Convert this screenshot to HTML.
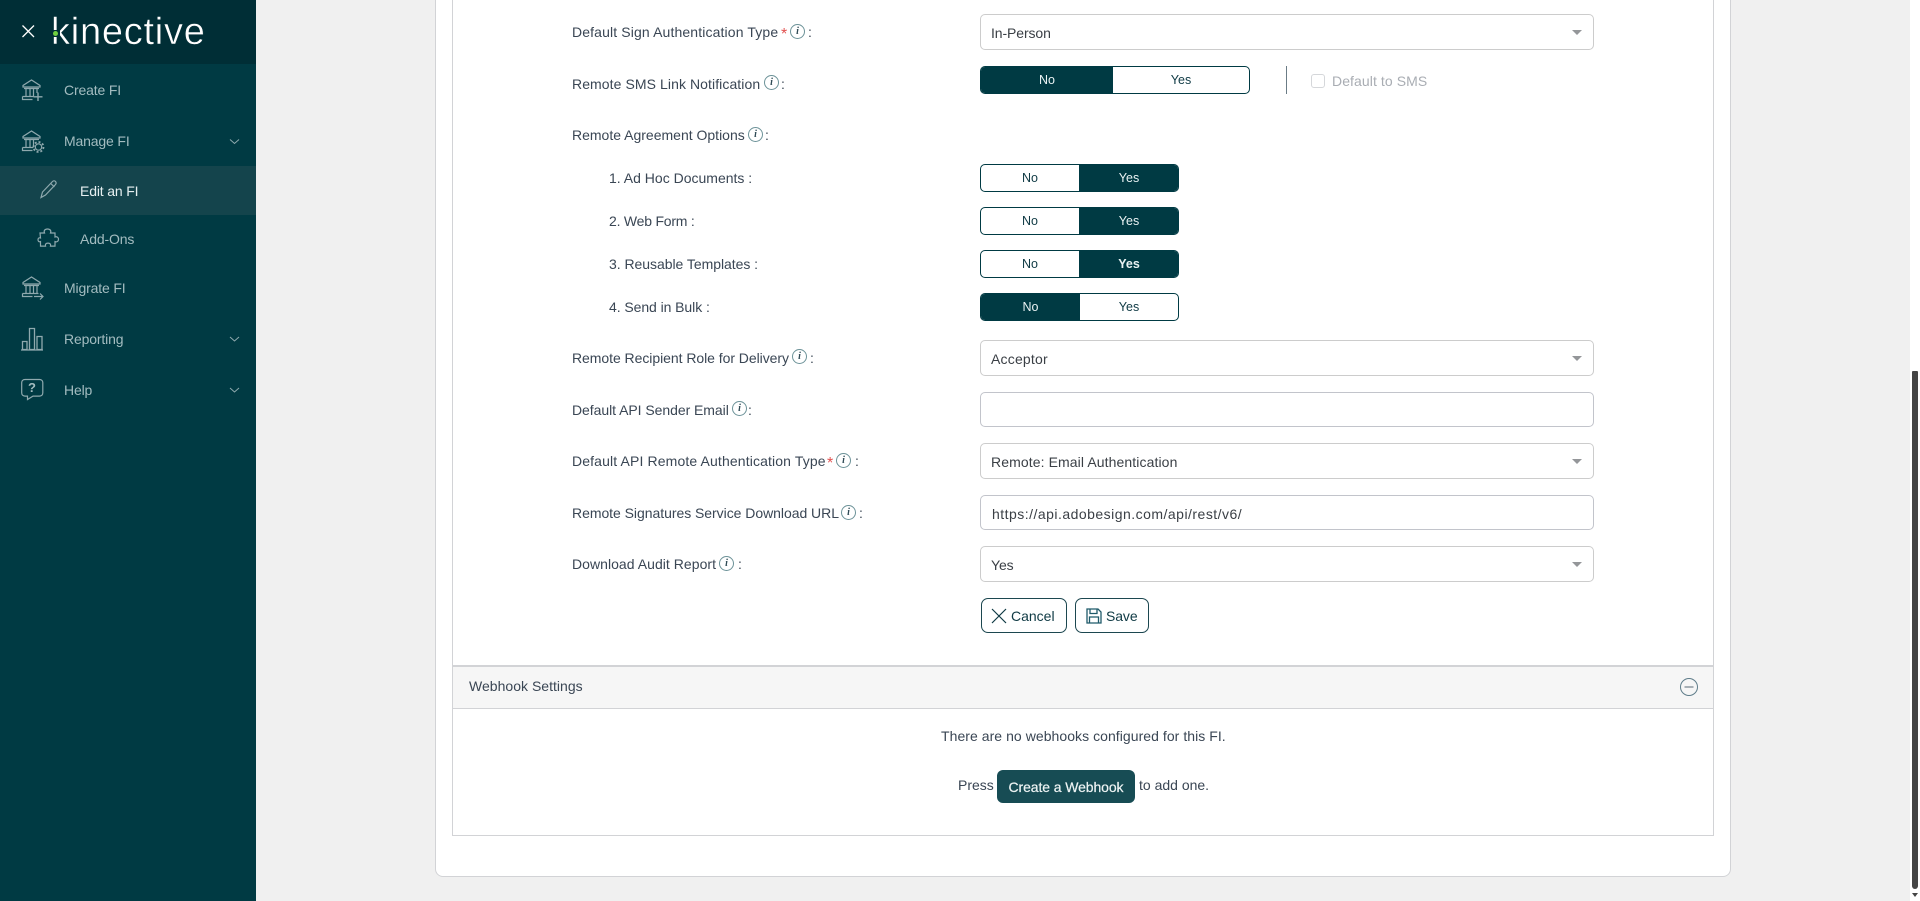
<!DOCTYPE html>
<html lang="en"><head><meta charset="utf-8"><title>Edit an FI</title>
<style>
html,body{margin:0;padding:0;width:1920px;height:901px;overflow:hidden;background:#f0f0f0;font-family:"Liberation Sans",Arial,sans-serif;font-size:14px;color:#3a4654}
*{box-sizing:border-box}
.a{position:absolute;white-space:nowrap}
svg{position:absolute;overflow:visible}
#side{position:absolute;left:0;top:0;width:256px;height:901px;background:#003a43}
#head{position:absolute;left:0;top:0;width:256px;height:64px;background:#002e36}
#act{position:absolute;left:0;top:166px;width:256px;height:49px;background:#14444c}
.nav{position:absolute;left:64px;line-height:20px;height:20px;color:#a3bcc0;font-size:14px;letter-spacing:-.15px}
.sub{left:80px}
.lbl{position:absolute;left:572px;line-height:20px;height:20px;font-size:14px;white-space:nowrap;color:#3a4654}
.s{left:609px}
.col{position:absolute;line-height:20px;height:20px;font-size:14px}
.req{position:absolute;line-height:20px;height:20px;color:#e2504f;font-size:16px}
.inf{position:absolute;width:15px;height:15px;border:1px solid #6c9298;border-radius:50%;text-align:center;font:italic bold 10px/13px "Liberation Serif",serif;color:#2f4a55}
.fld{position:absolute;left:980px;width:614px;height:36px;background:#fff;border:1px solid #ccc;border-radius:5px;padding-left:10px;line-height:36px;font-size:14px;letter-spacing:-.1px;color:#3a3f45}
.inp{height:35px;border-color:#c2c4cb;padding-left:11px;line-height:36px}
.arr{position:absolute;right:11px;top:15px;width:0;height:0;border-left:5px solid transparent;border-right:5px solid transparent;border-top:5px solid #949699}
.tg{position:absolute;left:980px;height:28px;border:1px solid #003a43;border-radius:5px;overflow:hidden;background:#fff;font-size:12.5px;line-height:26px;text-align:center;color:#0f3a44}
.tg div{position:absolute;top:0;height:26px}
.on{background:#003a43;color:#e9f2f3}
.btn{position:absolute;height:35px;background:#fff;border:1px solid #1c4750;border-radius:7px;line-height:35px;color:#0f3a44;font-size:14px}
</style></head><body>

<div id="side">
<div id="head"></div>
<svg style="left:0;top:0" width="256" height="420" viewBox="0 0 256 420" fill="none" stroke="#8fa9ae" stroke-width="1.2">
<path d="M22.5 25.5 34 37M34 25.5 22.5 37" stroke="#fff" stroke-width="1.3"/>
<!-- create -->
<path d="M23 87h17v-1.5L31.5 80 23 85.500zM24 88.500h15M26 89v7M30 89v7M33.500 89v7M37 89v4M22.500 96.500h11v-.1M22.500 96.500v3h10"/>
<path d="M38 92.500v8.500M33.500 96.800h9" stroke-width="1.400"/>
<!-- manage -->
<path d="M23 138h17v-1.500L31.500 131 23 136.500zM24 139.500h15M26 140v7M30 140v7M33.500 140v7M22.500 147.500h11M22.500 147.500v3h10"/>
<circle cx="38.500" cy="147" r="3.200"/><circle cx="38.500" cy="147" r="5" stroke-dasharray="2 1.900" stroke-width="1.800"/>
<path d="M230 139.500l4.500 4 4.500-4" stroke-width="1"/>
<!-- puzzle -->
<path d="M40.500 233.500h4.500c-1-2.500.5-4 3-4s4 1.500 3 4h4.500v4c2-.8 3.500.5 3.500 2.300s-1.500 3.100-3.500 2.300v4.500h-4.500c.6-1.800-.5-3-2.500-3s-3.100 1.200-2.500 3h-5v-4.500c-1.500.5-2.500-.2-2.500-1.800s1-2.400 2.500-1.800z" transform="translate(-.5 -.5)"/>
<!-- migrate -->
<path d="M23 284h17v-1.500L31.500 277 23 282.500zM24 285.500h15M26 286v7M30 286v7M33.500 286v7M37 286v7M22.500 293.500h16M22.500 293.500v3h10"/>
<path d="M34 296.500h9M40 293.500l3 3-3 3"/>
<!-- reporting -->
<path d="M22.500 341.500h4.500v8h-4.500zM29.500 328.500h5v21h-5zM37 336.500h5v13h-5zM21 350h22" stroke-width="1.300"/>
<!-- help -->
<path d="M25 379.500h14.500c2 0 3.300 1.300 3.300 3.300v10c0 2-1.300 3.300-3.300 3.300H33l-5.500 3.400v-3.400H25c-2 0-3.300-1.300-3.300-3.300v-10c0-2 1.300-3.300 3.300-3.300z"/>
<path d="M230 337l4.500 4 4.500-4M230 388l4.500 4 4.500-4" stroke-width="1"/>
</svg>
<div class="a" style="left:51px;top:10px;font-size:38px;line-height:44px;color:#fff;letter-spacing:.75px;-webkit-text-stroke:.5px #002e36">kinective</div>
<div class="a" style="left:52px;top:30px;width:8px;height:7px;background:#002e36"></div>
<div class="a" style="left:53px;top:31px;width:5px;height:5px;background:#6fcf3f;border-radius:50%"></div>
<div class="a" style="left:26px;top:379px;width:12px;text-align:center;font:bold 13px/18px 'Liberation Sans',sans-serif;color:#a3bcc0">?</div>
<div id="act"></div>
<svg style="left:0;top:166px" width="80" height="49" fill="none" stroke="#8fa9ae" stroke-width="1.200"><path d="M41 31.500l1.500-5.500 10-10.500c1-1 2.300-.8 3 0s.8 2 0 3l-10 10.500zM50.800 17.500l3.600 3.500"/></svg>
<div class="nav" style="top:80px">Create FI</div>
<div class="nav" style="top:131px">Manage FI</div>
<div class="nav sub" style="top:181px;color:#e6eff0">Edit an FI</div>
<div class="nav sub" style="top:229px">Add-Ons</div>
<div class="nav" style="top:278px">Migrate FI</div>
<div class="nav" style="top:329px">Reporting</div>
<div class="nav" style="top:380px">Help</div>
</div>

<!-- panel -->
<div class="a" style="left:435px;top:-10px;width:1296px;height:887px;background:#fff;border:1px solid #d2d3d6;border-radius:8px"></div>
<div class="a" style="left:452px;top:-10px;width:1262px;height:846px;background:#fff;border:1px solid #d2d3d6;border-width:0 1px 1px 1px"></div>

<!-- labels -->
<div class="lbl" style="top:22px;letter-spacing:.13px">Default Sign Authentication Type</div><div class="req" style="left:781px;top:25px">*</div><div class="inf" style="left:790px;top:24px">i</div><div class="col" style="left:808px;top:22px">:</div>
<div class="lbl" style="top:74px;letter-spacing:.08px">Remote SMS Link Notification</div><div class="inf" style="left:764px;top:75px">i</div><div class="col" style="left:781px;top:74px">:</div>
<div class="lbl" style="top:125px">Remote Agreement Options</div><div class="inf" style="left:748px;top:127px">i</div><div class="col" style="left:765px;top:125px">:</div>
<div class="lbl s" style="top:168px">1. Ad Hoc Documents :</div>
<div class="lbl s" style="top:211px;letter-spacing:-.22px">2. Web Form :</div>
<div class="lbl s" style="top:254px;letter-spacing:-.04px">3. Reusable Templates :</div>
<div class="lbl s" style="top:297px;letter-spacing:-.07px">4. Send in Bulk :</div>
<div class="lbl" style="top:348px;letter-spacing:-.05px">Remote Recipient Role for Delivery</div><div class="inf" style="left:792px;top:349px">i</div><div class="col" style="left:810px;top:348px">:</div>
<div class="lbl" style="top:400px;letter-spacing:-.05px">Default API Sender Email</div><div class="inf" style="left:732px;top:401px">i</div><div class="col" style="left:748px;top:400px">:</div>
<div class="lbl" style="top:451px;letter-spacing:.13px">Default API Remote Authentication Type</div><div class="req" style="left:827px;top:454px">*</div><div class="inf" style="left:836px;top:453px">i</div><div class="col" style="left:855px;top:451px">:</div>
<div class="lbl" style="top:503px;letter-spacing:-.04px">Remote Signatures Service Download URL</div><div class="inf" style="left:841px;top:505px">i</div><div class="col" style="left:859px;top:503px">:</div>
<div class="lbl" style="top:554px;letter-spacing:.04px">Download Audit Report</div><div class="inf" style="left:719px;top:556px">i</div><div class="col" style="left:738px;top:554px">:</div>

<!-- fields -->
<div class="fld" style="top:14px">In-Person<div class="arr"></div></div>
<div class="tg" style="top:66px;width:270px"><div class="on" style="left:0;width:132px">No</div><div style="left:132px;width:136px">Yes</div></div>
<div class="a" style="left:1286px;top:66px;width:1px;height:28px;background:#6b7c86"></div>
<div class="a" style="left:1311px;top:74px;width:14px;height:14px;border:1px solid #d5d7da;border-radius:3px;background:#fff"></div>
<div class="a" style="left:1332px;top:71px;line-height:20px;color:#a9adb3;letter-spacing:.08px">Default to SMS</div>

<div class="tg" style="top:164px;width:199px"><div style="left:0;width:98px">No</div><div class="on" style="left:98px;width:100px">Yes</div></div>
<div class="tg" style="top:207px;width:199px"><div style="left:0;width:98px">No</div><div class="on" style="left:98px;width:100px">Yes</div></div>
<div class="tg" style="top:250px;width:199px"><div style="left:0;width:98px">No</div><div class="on" style="left:98px;width:100px;font-weight:bold">Yes</div></div>
<div class="tg" style="top:293px;width:199px"><div class="on" style="left:0;width:99px">No</div><div style="left:99px;width:98px">Yes</div></div>

<div class="fld" style="top:340px;letter-spacing:.2px">Acceptor<div class="arr"></div></div>
<div class="fld inp" style="top:392px"></div>
<div class="fld" style="top:443px;letter-spacing:.1px">Remote: Email Authentication<div class="arr"></div></div>
<div class="fld inp" style="top:495px;letter-spacing:.48px">https://api.adobesign.com/api/rest/v6/</div>
<div class="fld" style="top:546px">Yes<div class="arr"></div></div>

<!-- buttons -->
<div class="btn" style="left:981px;top:598px;width:86px;padding-left:29px">Cancel
<svg style="left:9px;top:9px" width="16" height="16" fill="none" stroke="#0f3a44" stroke-width="1.200"><path d="M1 1l14 14M15 1L1 15"/></svg></div>
<div class="btn" style="left:1075px;top:598px;width:74px;padding-left:30px;letter-spacing:-.1px">Save
<svg style="left:10px;top:9px" width="16" height="16" fill="none" stroke="#1f5a6a" stroke-width="1.300"><path d="M1 1h11l3 3v11H1zM4 1v4.500h7V1M3.500 15V9h9v6"/></svg></div>

<!-- webhook -->
<div class="a" style="left:453px;top:665px;width:1260px;height:44px;background:#f6f6f6;border-top:2px solid #d2d3d6;border-bottom:1px solid #d2d3d6"></div>
<div class="a" style="left:469px;top:676px;line-height:20px;color:#3a4654;letter-spacing:.02px">Webhook Settings</div>
<svg style="left:1679px;top:677px" width="20" height="20" fill="none" stroke="#5f7d8a" stroke-width="1"><circle cx="10" cy="10" r="8.500"/><path d="M5.500 10h9" stroke-width="1.300" stroke="#7f8a95"/></svg>
<div class="a" style="left:941px;top:726px;line-height:20px;letter-spacing:.05px">There are no webhooks configured for this FI.</div>
<div class="a" style="left:958px;top:775px;line-height:20px">Press</div>
<div class="a" style="left:997px;top:770px;width:138px;height:33px;background:#174c54;border-radius:6px;color:#eef4f4;text-align:center;line-height:34px;font-size:14px;letter-spacing:-.1px;-webkit-text-stroke:.2px #eef4f4">Create a Webhook</div>
<div class="a" style="left:1139px;top:775px;line-height:20px">to add one.</div>

<!-- scrollbar -->
<div class="a" style="left:1910px;top:0;width:10px;height:901px;background:#fff"></div>
<div class="a" style="left:1912px;top:371px;width:6px;height:518px;background:#454545;border-radius:1px 1px 3px 3px"></div>
<div class="a" style="left:1912px;top:893px;width:0;height:0;border-left:3px solid transparent;border-right:3px solid transparent;border-top:4px solid #454545"></div>
</body></html>
